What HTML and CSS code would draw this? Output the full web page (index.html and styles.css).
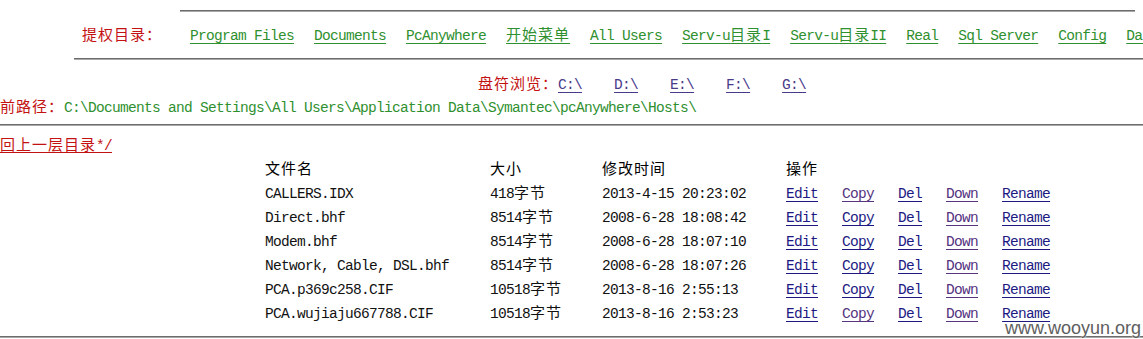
FILE: index.html
```html
<!DOCTYPE html>
<html lang="zh-CN">
<head>
<meta charset="utf-8">
<title>文件管理</title>
<link rel="stylesheet" href="styles.css">
</head>
<body>
<div class="page">
  <div class="top">
    <div class="rule rule-top"></div>
    <div class="nav">
      <div class="nav-inner">
        <span class="nav-label zh">提权目录：</span>
        <a href="#">Program Files</a>
        <a href="#"><span>Documents</span></a>
        <a href="#">PcAnywhere</a>
        <a href="#"><span class="zh">开始菜单</span></a>
        <a href="#">All Users</a>
        <a href="#">Serv-u<span class="zh">目录</span>I</a>
        <a href="#">Serv-u<span class="zh">目录</span>II</a>
        <a href="#">Real</a>
        <a href="#">Sql Server</a>
        <a href="#">Config</a>
        <a href="#">Data</a>
      </div>
    </div>
    <div class="rule rule-nav"></div>
  </div>

  <div class="drives">
    <div class="drives-inner">
      <span class="drives-label zh">盘符浏览：</span>
      <a href="#">C:\</a>
      <a href="#">D:\</a>
      <a href="#">E:\</a>
      <a href="#">F:\</a>
      <a href="#">G:\</a>
    </div>
  </div>

  <div class="path">
    <div class="path-inner">
      <span class="path-label zh">前路径：</span>
      <span class="path-value">C:\Documents and Settings\All Users\Application Data\Symantec\pcAnywhere\Hosts\</span>
    </div>
  </div>

  <div class="rule rule-full"></div>

  <div class="up-row">
    <a class="up-link" href="#"><span class="zh">回上一层目录</span>*/</a>
  </div>

  <div class="files">
    <div class="file-row head">
      <span class="zh">文件名</span>
      <span class="zh">大小</span>
      <span class="zh">修改时间</span>
      <span class="zh">操作</span>
    </div>
    <div class="file-row">
      <span>CALLERS.IDX</span>
      <span>418<span class="zh">字节</span></span>
      <span>2013-4-15 20:23:02</span>
      <span class="ops"><a href="#">Edit</a><a class="v" href="#">Copy</a><a href="#">Del</a><a class="v" href="#">Down</a><a href="#">Rename</a></span>
    </div>
    <div class="file-row">
      <span>Direct.bhf</span>
      <span>8514<span class="zh">字节</span></span>
      <span>2008-6-28 18:08:42</span>
      <span class="ops"><a href="#">Edit</a><a href="#">Copy</a><a href="#">Del</a><a class="v" href="#">Down</a><a href="#">Rename</a></span>
    </div>
    <div class="file-row">
      <span>Modem.bhf</span>
      <span>8514<span class="zh">字节</span></span>
      <span>2008-6-28 18:07:10</span>
      <span class="ops"><a href="#">Edit</a><a href="#">Copy</a><a href="#">Del</a><a class="v" href="#">Down</a><a href="#">Rename</a></span>
    </div>
    <div class="file-row">
      <span>Network, Cable, DSL.bhf</span>
      <span>8514<span class="zh">字节</span></span>
      <span>2008-6-28 18:07:26</span>
      <span class="ops"><a href="#">Edit</a><a href="#">Copy</a><a href="#">Del</a><a class="v" href="#">Down</a><a href="#">Rename</a></span>
    </div>
    <div class="file-row">
      <span>PCA.p369c258.CIF</span>
      <span>10518<span class="zh">字节</span></span>
      <span>2013-8-16 2:55:13</span>
      <span class="ops"><a href="#">Edit</a><a href="#">Copy</a><a href="#">Del</a><a class="v" href="#">Down</a><a href="#">Rename</a></span>
    </div>
    <div class="file-row">
      <span>PCA.wujiaju667788.CIF</span>
      <span>10518<span class="zh">字节</span></span>
      <span>2013-8-16 2:53:23</span>
      <span class="ops"><a href="#">Edit</a><a class="v" href="#">Copy</a><a href="#">Del</a><a class="v" href="#">Down</a><a href="#">Rename</a></span>
    </div>
  </div>

  <div class="rule rule-full rule-bottom"></div>

  <div class="watermark">www.wooyun.org</div>
</div>
</body>
</html>
```

FILE: styles.css
```css
html, body {
  margin: 0;
  padding: 0;
  overflow: hidden;
  background: #ffffff;
}

body {
  font-family: "Liberation Mono", "Noto Sans CJK SC", monospace;
  font-size: 14.5px;
  letter-spacing: -0.7px;
  line-height: 18px;
  color: #000000;
}

.zh {
  font-family: "Noto Sans CJK SC", sans-serif;
  font-size: 15px;
  letter-spacing: 1px;
}

a {
  text-decoration: underline;
  text-underline-offset: 3px;
}

.page {
  position: relative;
  width: 1143px;
  height: 339px;
}

.rule {
  height: 0;
  border-top: 1px solid #6c6c6c;
  border-bottom: 1px solid #a9a9a9;
}

.top {
  padding-top: 10px;
}

.rule-top {
  margin-left: 180px;
  width: 955px;
}

.nav {
  display: flex;
  align-items: center;
  height: 46px;
  padding-left: 82px;
  white-space: nowrap;
}

.nav-inner {
  display: flex;
  align-items: baseline;
  gap: 20px;
}

.nav-label {
  width: 88px;
  color: #c41212;
}

.nav-inner a {
  color: #2f902f;
}

.rule-nav {
  margin-left: 74px;
}

.drives {
  display: flex;
  align-items: center;
  height: 23px;
  margin-top: 12px;
  padding-left: 478px;
  white-space: nowrap;
}

.drives-inner {
  display: flex;
  align-items: baseline;
  gap: 32px;
}

.drives-label {
  margin-right: -32px;
  color: #c41212;
}

.drives-inner a {
  color: #4a3a8a;
}

.path {
  display: flex;
  align-items: center;
  height: 23px;
  white-space: nowrap;
}

.path-inner {
  display: flex;
  align-items: baseline;
}

.path-label {
  color: #c41212;
}

.path-value {
  color: #2f902f;
}

.rule-full {
  margin-top: 6px;
}

.up-row {
  display: flex;
  align-items: center;
  height: 21px;
  margin-top: 8px;
}

.up-link {
  color: #c41212;
  text-underline-offset: 2px;
}

.files {
  padding-left: 265px;
}

.file-row {
  display: grid;
  grid-template-columns: 225px 112px 184px auto;
  align-items: baseline;
  align-content: center;
  height: 24px;
  white-space: nowrap;
  color: #111111;
}

.file-row.head {
  height: 26px;
  color: #000000;
}

.ops {
  display: flex;
  align-items: baseline;
  gap: 24px;
}

.ops a {
  color: #1c1a82;
}

.ops a.v {
  color: #55337f;
}

.rule-bottom {
  margin-top: 11px;
}

.watermark {
  position: absolute;
  right: 2px;
  bottom: 2px;
  font-family: "Liberation Sans", Arial, sans-serif;
  font-size: 18px;
  line-height: 18px;
  letter-spacing: 0;
  color: #5e5e5e;
  text-shadow: 0 0 2px #ffffff, 0 0 1px #ffffff;
}
```
